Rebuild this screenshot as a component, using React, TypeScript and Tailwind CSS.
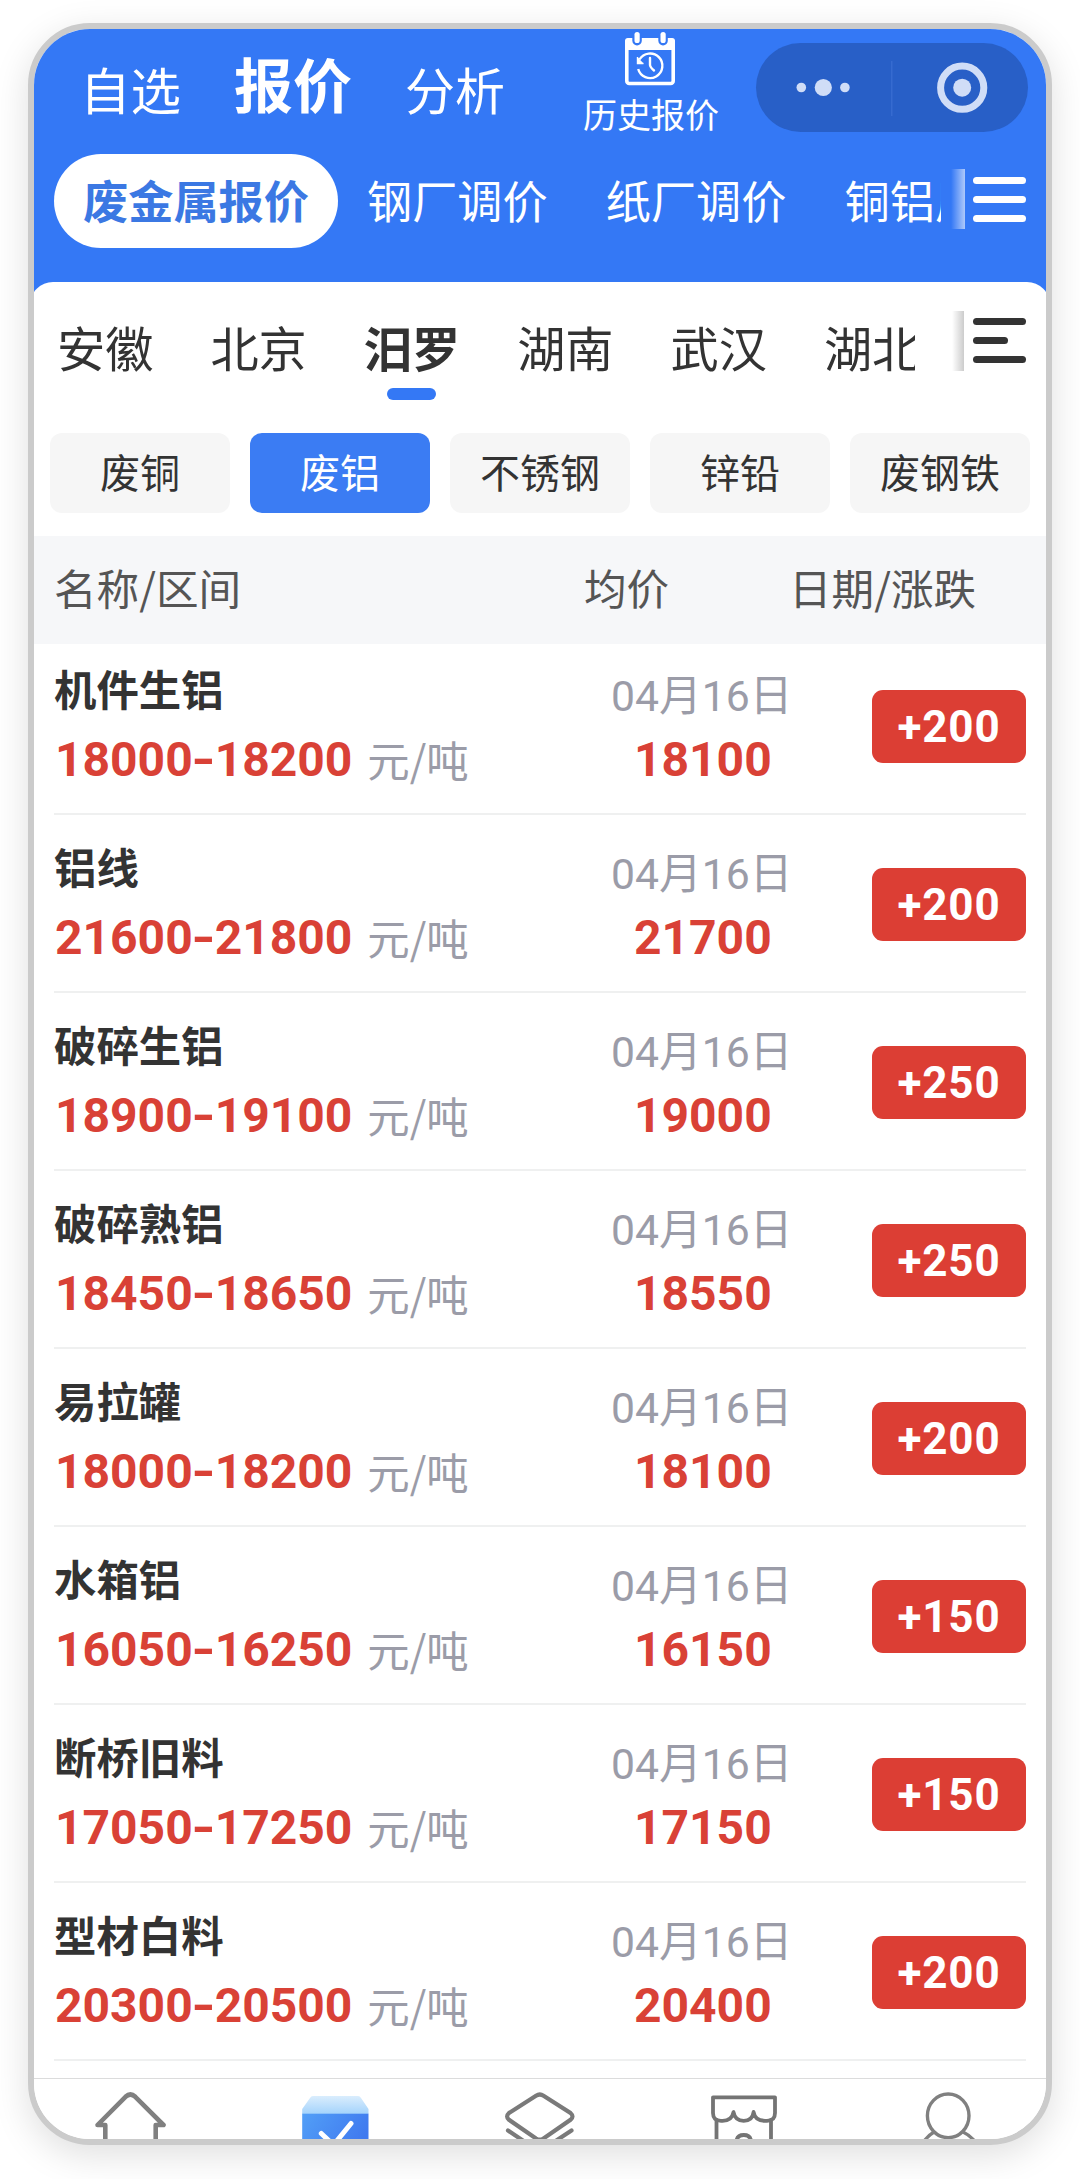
import clsx from "clsx";

const markets = ["钢厂调价", "纸厂调价", "铜铝厂调价"];
const cities = ["安徽", "北京", "汨罗", "湖南", "武汉", "湖北"];
const metals = ["废铜", "废铝", "不锈钢", "锌铅", "废钢铁"];

const quotes = [
  { name: "机件生铝", low: 18000, high: 18200, avg: 18100, change: "+200" },
  { name: "铝线", low: 21600, high: 21800, avg: 21700, change: "+200" },
  { name: "破碎生铝", low: 18900, high: 19100, avg: 19000, change: "+250" },
  { name: "破碎熟铝", low: 18450, high: 18650, avg: 18550, change: "+250" },
  { name: "易拉罐", low: 18000, high: 18200, avg: 18100, change: "+200" },
  { name: "水箱铝", low: 16050, high: 16250, avg: 16150, change: "+150" },
  { name: "断桥旧料", low: 17050, high: 17250, avg: 17150, change: "+150" },
  { name: "型材白料", low: 20300, high: 20500, avg: 20400, change: "+200" },
];

function CalendarIcon() {
  return (
    <svg width="52" height="54" viewBox="0 0 52 54" fill="none">
      <rect x="1.8" y="8" width="46.4" height="43.5" rx="2.5" stroke="#fff" strokeWidth="3.6" />
      <path d="M0 18V9a3 3 0 0 1 3-3h44a3 3 0 0 1 3 3v9z" fill="#fff" />
      <rect x="7.3" y="-4" width="9.5" height="17.5" rx="4.7" fill="#3478f5" />
      <rect x="33.3" y="-4" width="9.5" height="17.5" rx="4.7" fill="#3478f5" />
      <rect x="9.5" y="0" width="5.2" height="11" rx="2.6" fill="#fff" />
      <rect x="35.5" y="0" width="5.2" height="11" rx="2.6" fill="#fff" />
      <path d="M14.500 27.5A12.3 12.3 0 1 1 13.2 37" stroke="#fff" strokeWidth="2.4" />
      <path d="M12.500 25v6.500h6" fill="#fff" stroke="#fff" strokeWidth="1.4" />
      <path d="M25 26v7q0 2 4 5.500" stroke="#fff" strokeWidth="2.4" strokeLinecap="round" />
    </svg>
  );
}

function HomeIcon() {
  return (
    <svg width="80" height="61" viewBox="0 0 80 61" fill="none" stroke="#808080" strokeWidth="4.6" strokeLinejoin="round">
      <path d="M15.3 64V46H7.5L35.5 17.8Q40.4 13.2 45.3 17.8L73.5 46H65.7V64" />
    </svg>
  );
}

function QuoteIcon() {
  return (
    <svg width="80" height="61" viewBox="0 0 80 61" fill="none">
      <defs>
        <linearGradient id="lid" x1="0" y1="0" x2="0" y2="1">
          <stop offset="0" stopColor="#daedfd" />
          <stop offset="1" stopColor="#a3d3fc" />
        </linearGradient>
        <linearGradient id="box" x1="0" y1="0" x2="1" y2="0.4">
          <stop offset="0" stopColor="#529ff7" />
          <stop offset="1" stopColor="#407aef" />
        </linearGradient>
      </defs>
      <path d="M18 17H63Q65 17 66 19L73.5 30V35H7.2V30L15 19Q16 17 18 17Z" fill="url(#lid)" />
      <rect x="7.2" y="34.7" width="66.3" height="40" fill="url(#box)" />
      <path d="M26.3 54.5L38.5 66L56 44.5" stroke="#fff" strokeWidth="5" strokeLinecap="round" />
    </svg>
  );
}

function LayersIcon() {
  return (
    <svg width="80" height="61" viewBox="0 0 80 61" fill="none" stroke="#7a7a7a" strokeWidth="4.2" strokeLinecap="round">
      <path d="M9 34L36 16.7Q39.8 14.3 43.5 16.7L70.5 34Q74.5 37.5 70.5 40.8L43.5 59.5Q39.8 62 36 59.5L9 40.8Q5.2 37.5 9 34Z" />
      <path d="M8 51.5L34 69M71.5 51.5L45 69" />
    </svg>
  );
}

function StoreIcon() {
  return (
    <svg width="80" height="61" viewBox="1 0 80 61" fill="none" stroke="#747474" strokeWidth="3.8" strokeLinecap="round" strokeLinejoin="round">
      <path d="M9 18.3H71V34Q71 41.8 63 41.8H61Q51 41.8 49.6 33Q48.5 41.8 39.7 41.8Q31 41.8 29.5 33Q28 41.8 18.5 41.8H17Q9 41.8 9 34Z" />
      <path d="M12.5 41V64M67 41V64M32.5 61.5Q33.5 56 39.8 56Q46 56 47 61.5" />
    </svg>
  );
}

function UserIcon() {
  return (
    <svg width="80" height="61" viewBox="1.5 0 80 61" fill="none" stroke="#808080" strokeWidth="3.4">
      <ellipse cx="39.7" cy="36.8" rx="20.8" ry="21.8" />
      <path d="M15 63Q19 57 25.5 53M54.5 53Q61 56 67 63" />
    </svg>
  );
}

function Header() {
  return (
    <header className="h-[273px] bg-[#3478f5] text-white">
      <div className="flex h-[125px] items-start whitespace-nowrap">
        <span className="mt-[34px] ml-[46px] text-[50.5px] leading-none">自选</span>
        <span className="mt-[24px] ml-[53px] text-[59px] leading-none font-bold">报价</span>
        <span className="mt-[34px] ml-[53px] text-[50px] leading-none">分析</span>
        <div className="mt-[3px] ml-[78px] flex w-[136px] flex-col items-center">
          <CalendarIcon />
          <span className="mt-[11px] text-[34px] leading-none">历史报价</span>
        </div>
        <div className="mt-[14px] ml-[37px] flex h-[89px] w-[272px] items-center rounded-full bg-[#285fc7]">
          <svg width="272" height="89" viewBox="0 0 272 89" fill="#d0ddf7">
            <circle cx="45.3" cy="44.5" r="4.8" />
            <circle cx="67.3" cy="44.5" r="8.6" />
            <circle cx="88.9" cy="44.5" r="4.8" />
            <rect x="135" y="18" width="1.5" height="55" fill="#366bd0" />
            <circle cx="206.2" cy="44.7" r="21.6" fill="none" stroke="#d0ddf7" strokeWidth="7" />
            <circle cx="206.2" cy="44.7" r="9" />
          </svg>
        </div>
      </div>
      <div className="flex items-center">
        <nav className="ml-[20px] flex w-[887px] items-center overflow-hidden text-[45.2px] leading-none whitespace-nowrap">
          <span className="flex h-[94px] w-[284px] shrink-0 items-center justify-center rounded-full bg-white pb-[3px] font-bold text-[#3b78e3]">
            废金属报价
          </span>
          {markets.map((market) => (
            <span key={market} className="ml-[29px] shrink-0 pb-[3px] nth-[n+3]:ml-[58px]">{market}</span>
          ))}
        </nav>
        <div className="mb-[4px] ml-[10px] h-[60px] w-[14px] bg-linear-to-r from-white/0 to-white/60" />
        <div className="mb-[4px] ml-[8px] flex flex-col gap-[12px]">
          <span className="h-[7px] w-[53px] rounded-full bg-white" />
          <span className="h-[7px] w-[53px] rounded-full bg-white" />
          <span className="h-[7px] w-[53px] rounded-full bg-white" />
        </div>
      </div>
    </header>
  );
}

function Filters() {
  return (
    <section className="relative -mx-[4px] -mt-[20px] h-[254px] rounded-t-[23px] bg-white px-[4px] pt-[29px] text-[#333]">
      <div className="flex items-start">
        <nav className="ml-[23px] flex w-[858px] gap-[57px] overflow-hidden text-[48.2px] leading-none whitespace-nowrap">
          {cities.map((city) => (
            <span
              key={city}
              className={clsx("flex h-[90px] shrink-0 flex-col items-center pt-[11px]", city === "汨罗" && "font-bold")}
            >
              {city}
              {city === "汨罗" && <i className="mt-[18px] h-[12px] w-[49px] rounded-full bg-[#3478f5]" />}
            </span>
          ))}
        </nav>
        <div className="ml-[37px] h-[60px] w-[12px] bg-linear-to-r from-black/0 to-black/20" />
        <div className="mt-[7px] ml-[9px] flex flex-col gap-[12px]">
          <span className="h-[7px] w-[53px] rounded-full bg-[#333]" />
          <span className="h-[7px] w-[35px] rounded-full bg-[#333]" />
          <span className="h-[7px] w-[53px] rounded-full bg-[#333]" />
        </div>
      </div>
      <div className="mt-[32px] ml-[16px] grid w-[980px] grid-cols-5 gap-[20px] text-[40px] leading-none">
        {metals.map((metal) => (
          <button
            key={metal}
            className={clsx(
              "flex h-[80px] items-center justify-center rounded-[12px] pb-[4px] whitespace-nowrap",
              metal === "废铝" ? "bg-[#3b7cf3] text-white" : "bg-[#f6f6f6]",
            )}
          >
            {metal}
          </button>
        ))}
      </div>
    </section>
  );
}

function QuoteRow({ quote }: { quote: (typeof quotes)[number] }) {
  return (
    <li className="mx-[20px] flex h-[178px] border-b-2 border-[#eff0f0] whitespace-nowrap">
      <div className="w-[540px] pt-[30px]">
        <h3 className="text-[42.4px] leading-[42px] font-bold text-[#333]">{quote.name}</h3>
        <p className="mt-[25px] flex items-center leading-[48px]">
          <span className="mt-[2px] pl-[1px] font-[Roboto,sans-serif] text-[48px] font-bold text-[#d94136]">
            {quote.low}
            <span className="mx-[1.5px] inline-block scale-x-130">-</span>
            {quote.high}
          </span>
          <span className="ml-[15px] text-[42.4px] text-[#9b9ca8]">元/吨</span>
        </p>
      </div>
      <div className="w-[215px] pt-[38px]">
        <p className="ml-[17px] font-[Roboto,'Noto_Sans_CJK_SC',sans-serif] text-[42.7px] leading-[42px] text-[#9b9ca8]">04月16日</p>
        <p className="mt-[19px] ml-[40px] font-[Roboto,sans-serif] text-[48px] leading-[48px] font-bold text-[#d94136]">{quote.avg}</p>
      </div>
      <span className="mt-[53px] ml-auto flex h-[73px] w-[154px] items-center justify-center rounded-[11px] bg-[#dc3e34] font-[Roboto,sans-serif] text-[44px] font-bold tracking-[0.8px] text-white">
        {quote.change}
      </span>
    </li>
  );
}

function TabBar() {
  return (
    <nav className="-mx-[6px] mt-[17px] grid grid-cols-5 justify-items-center border-t border-[#dcdcdc] bg-white">
      <HomeIcon />
      <QuoteIcon />
      <LayersIcon />
      <StoreIcon />
      <UserIcon />
    </nav>
  );
}

export default function App() {
  return (
    <main className="h-[2179px] w-[1080px] overflow-hidden bg-white px-[28px] pt-[23px] font-['Noto_Sans_CJK_SC',sans-serif]">
      <div className="h-[2122px] overflow-hidden rounded-[62px] border-[6px] border-[#cbcbcb] bg-white shadow-[0_10px_36px_rgba(0,0,0,0.13)]">
        <Header />
        <Filters />
        <div className="flex h-[108px] bg-[#f6f7f9] pt-[30px] text-[42.6px] leading-[42px] whitespace-nowrap text-[#555]">
          <span className="w-[550px] pl-[20px]">名称/区间</span>
          <span className="w-[205px]">均价</span>
          <span>日期/涨跌</span>
        </div>
        {/* the first row sits a little tighter under the table head */}
        <ul className="-mt-[7px]">
          {quotes.map((quote) => (
            <QuoteRow key={quote.name} quote={quote} />
          ))}
        </ul>
        <TabBar />
      </div>
    </main>
  );
}
